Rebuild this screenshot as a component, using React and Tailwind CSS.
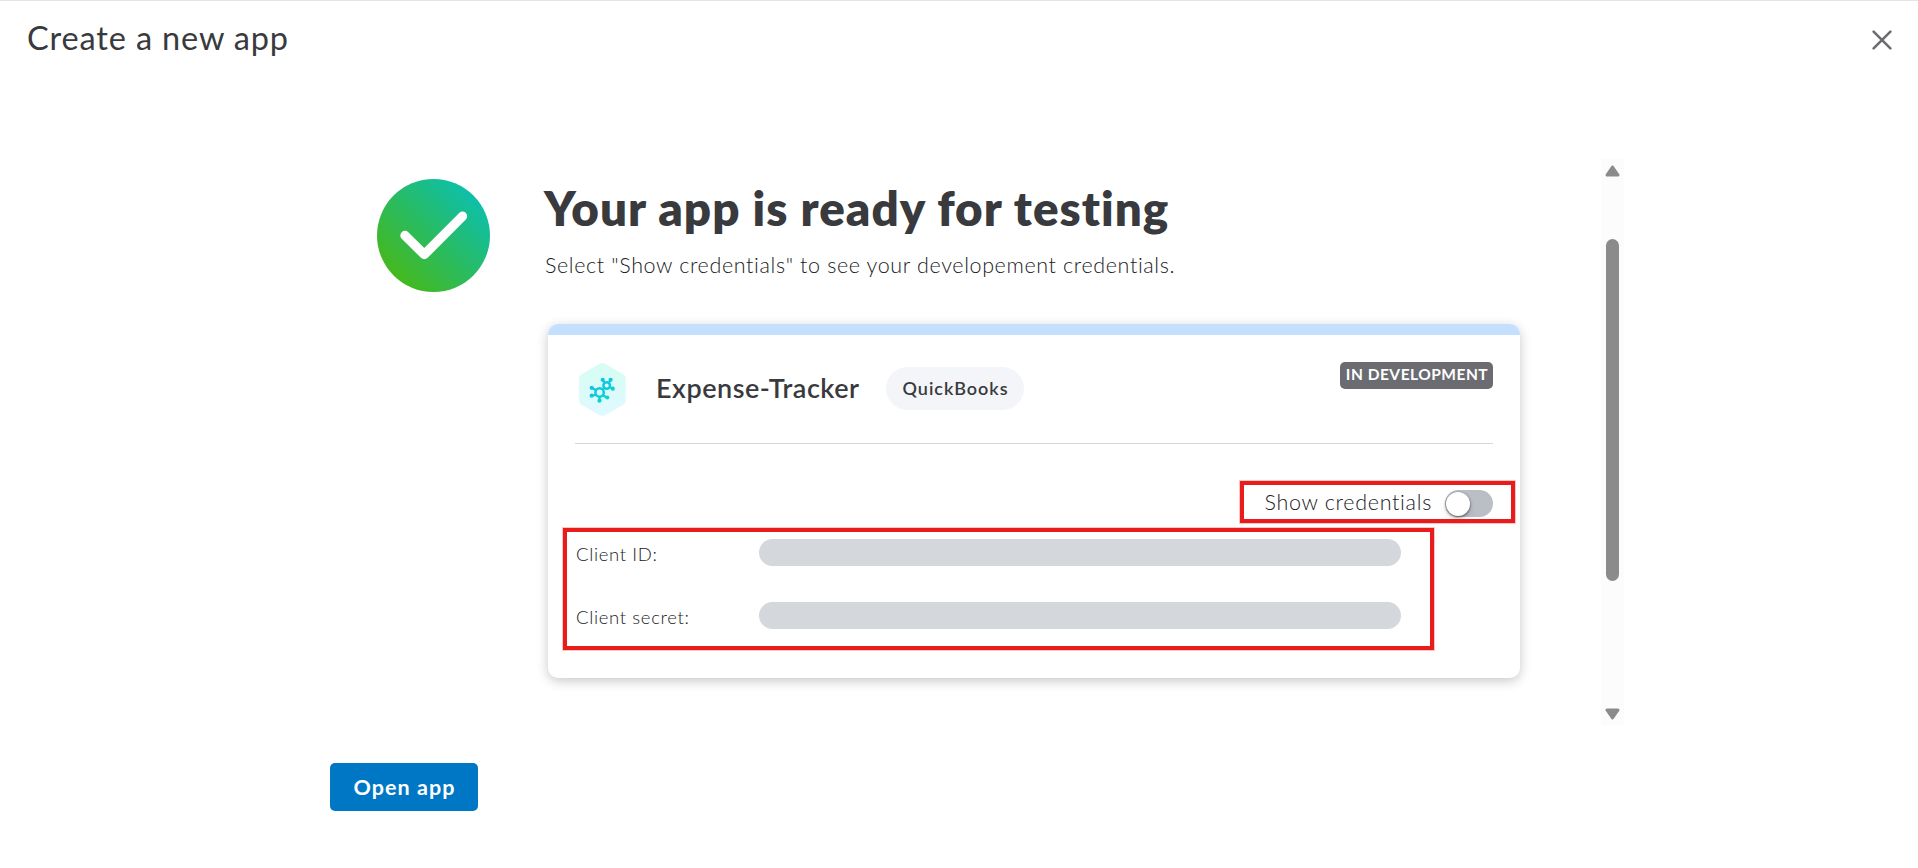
function CloseIcon() {
  return (
    <svg width="22" height="22" viewBox="0 0 22 22" fill="none" stroke="#6b6c72" strokeWidth="2.6" strokeLinecap="round">
      <path d="M2.6 2.6 19.4 19.4M19.4 2.6 2.6 19.4" />
    </svg>
  );
}

function SuccessBadge() {
  return (
    <svg className="shrink-0" width="113" height="113" viewBox="0 0 113 113" fill="none">
      <defs>
        <linearGradient id="success" x1="16" y1="97" x2="97" y2="16" gradientUnits="userSpaceOnUse">
          <stop stopColor="#45b81c" />
          <stop offset="1" stopColor="#0dbfaa" />
        </linearGradient>
      </defs>
      <circle cx="56.5" cy="56.5" r="56.5" fill="url(#success)" />
      <path d="M28 56.5 47.3 75.5 85.5 37.3" stroke="#fff" strokeWidth="9.4" strokeLinecap="round" strokeLinejoin="round" />
    </svg>
  );
}

function AppIcon() {
  return (
    <svg className="shrink-0" width="47" height="53" viewBox="0 0 47 53" fill="none">
      <defs>
        <linearGradient id="hex" x1="0" y1="0" x2="0" y2="53" gradientUnits="userSpaceOnUse">
          <stop stopColor="#d6fdf3" />
          <stop offset="1" stopColor="#e0f9ff" />
        </linearGradient>
        <linearGradient id="atoms" x1="14" y1="16" x2="30" y2="38" gradientUnits="userSpaceOnUse">
          <stop stopColor="#1cb8ec" />
          <stop offset="1" stopColor="#00dccb" />
        </linearGradient>
      </defs>
      <path d="M20.6.8a5.4 5.4 0 0 1 5.4 0L44.3 11.3A5 5 0 0 1 46.7 15.6V37.4a5 5 0 0 1-2.4 4.3L26 52.2a5.4 5.4 0 0 1-5.4 0L2.4 41.7A5 5 0 0 1 0 37.400V15.600a5 5 0 0 1 2.400-4.300Z" fill="url(#hex)" />
      <g stroke="url(#atoms)" strokeWidth="2.2">
        <circle cx="20.600" cy="29.500" r="4.200" strokeWidth="2.500" />
        <circle cx="27.700" cy="22.500" r="3.300" strokeWidth="2.500" />
        <path d="M17.300 27.200 13 25M17.200 31.600 13 32.800M20.500 33.500V37.500M23.600 32.300 28 34.500M25.600 20 23.700 17M29.800 20 31.500 17M30.700 24 33.600 25.600M23.500 26.700 25.300 24.900" />
      </g>
      <g fill="url(#atoms)">
        <circle cx="12.700" cy="24.800" r="2.100" />
        <circle cx="12.700" cy="32.700" r="2.100" />
        <circle cx="20.500" cy="37.700" r="2.100" />
        <circle cx="28.200" cy="34.500" r="2.100" />
        <circle cx="23.700" cy="16.800" r="2.100" />
        <circle cx="31.600" cy="16.800" r="2.100" />
        <circle cx="33.800" cy="25.700" r="2.100" />
      </g>
    </svg>
  );
}

function Arrow({ down }) {
  return (
    <svg className={down ? 'rotate-180' : ''} width="15" height="12" viewBox="0 0 15 12">
      <path d="M7.500 2 13 10H2Z" fill="#8b8b8b" stroke="#8b8b8b" strokeWidth="3" strokeLinejoin="round" />
    </svg>
  );
}

function Scrollbar() {
  return (
    <div className="mt-[-1px] flex h-[566px] w-[23px] flex-col items-center bg-[#fcfcfc] pt-[6px] pb-[5px]">
      <Arrow />
      <div className="mt-[62px] h-[342px] w-[13px] rounded-full bg-[#8b8b8b]" />
      <div className="mt-auto">
        <Arrow down />
      </div>
    </div>
  );
}

function CredentialRow({ label }) {
  return (
    <div className="flex h-[27px]">
      <span className="w-[184px] pt-[2px] pl-px text-[18.5px] leading-[27px] font-light tracking-[0.65px] text-[#202124]">{label}</span>
      <div className="h-[27px] w-[642px] rounded-full bg-[#d4d7dc]" />
    </div>
  );
}

function AppCard() {
  return (
    <section className="relative mt-[43px] ml-1 h-[354px] w-[972px] rounded-[10px] bg-white shadow-[0_3px_12px_rgba(0,0,0,0.22)]">
      <div className="h-[11px] rounded-t-[10px] bg-[#c5e0ff]" />
      <div className="mx-[27px] flex h-[109px] items-start border-b border-[#d4d7dc] pt-[27px]">
        <div className="pt-px pl-1">
          <AppIcon />
        </div>
        <h2 className="mt-[7px] ml-[30px] w-[230px] text-[27px] leading-[38px] font-semibold tracking-[0.52px] whitespace-nowrap">Expense-Tracker</h2>
        <span className="mt-[5px] flex h-[43px] w-[138px] items-center justify-center rounded-full bg-[#f4f5f8] pl-px text-[18px] font-semibold tracking-[0.95px]">QuickBooks</span>
        <span className="ml-auto flex h-[27px] w-[153px] items-center justify-center rounded-[5px] bg-[#6b6c72] pb-[2px] pl-px text-[15.5px] font-bold tracking-[0.5px] whitespace-nowrap text-white">IN DEVELOPMENT</span>
      </div>
      <div className="mx-[27px] mt-[46px] flex h-[27px] items-center justify-end">
        <span className="mr-[13px] pb-[2px] text-[21.5px] leading-[25px] font-light tracking-[0.7px] text-[#202124]">Show credentials</span>
        <button className="flex h-[27px] w-12 items-center rounded-full bg-[#babec5] pl-px">
          <span className="size-6 rounded-full bg-white shadow-[0_1px_3px_rgba(0,0,0,0.6),0_6px_10px_rgba(0,0,0,0.08)]" />
        </button>
      </div>
      <div className="mx-[27px] mt-[22px] flex flex-col gap-9">
        <CredentialRow label="Client ID:" />
        <CredentialRow label="Client secret:" />
      </div>
      <div className="absolute top-[157px] left-[692px] h-[42px] w-[275px] border-4 border-[#e91c1c] shadow-[0_0_0_1px_rgba(233,28,28,0.25)]" />
      <div className="absolute top-[204px] left-[15px] h-[122px] w-[871px] border-4 border-[#e91c1c] shadow-[0_0_0_1px_rgba(233,28,28,0.25)]" />
    </section>
  );
}

export default function App() {
  return (
    <div className="flex h-[868px] w-full flex-col overflow-hidden border-t border-[#e9e0ea] bg-white font-['Lato','Open_Sans',sans-serif] text-[#393a3d]">
      <header className="flex h-[79px] items-start justify-between pt-[17px] pr-[25px] pl-[27px]">
        <h1 className="text-[32.5px] leading-10 tracking-[0.85px]">Create a new app</h1>
        <button aria-label="Close" className="mt-[11px]">
          <CloseIcon />
        </button>
      </header>
      <main className="mt-20 flex pl-[377px]">
        <div className="pt-[19px]">
          <SuccessBadge />
        </div>
        <div className="ml-[54px] w-[1057px] pt-[18px]">
          <h2 className="text-[47.5px] leading-[60px] font-extrabold tracking-[1.03px]">Your app is ready for testing</h2>
          <p className="mt-[12px] mb-[44px] pl-px text-[21.5px] leading-[30px] font-light tracking-[0.63px] text-[#202124]">Select "Show credentials" to see your developement credentials.</p>
          <AppCard />
        </div>
        <Scrollbar />
      </main>
      <footer className="mt-[38px] pl-[330px]">
        <button className="h-12 w-[148px] rounded-[5px] bg-[#0077c5] pl-px text-[21.5px] font-bold tracking-[1.05px] text-white">Open app</button>
      </footer>
    </div>
  );
}
